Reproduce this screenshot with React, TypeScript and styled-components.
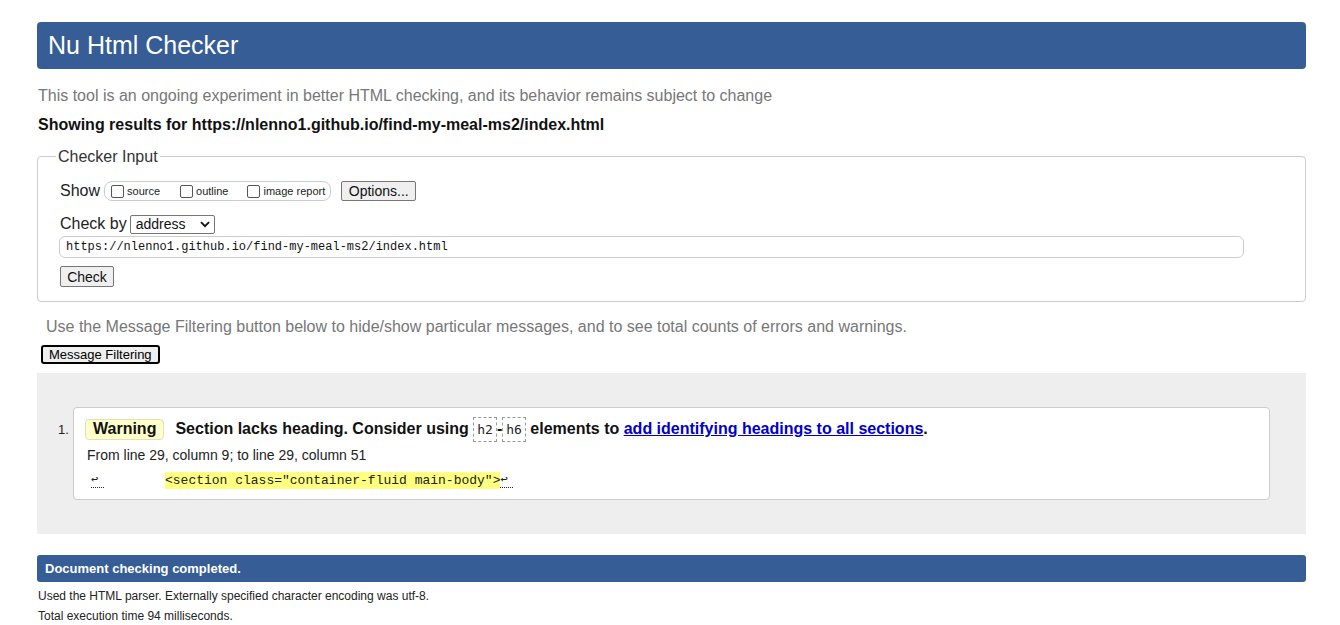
import React from "react";
import styled, { createGlobalStyle } from "styled-components";

const Global = createGlobalStyle`
  html, body { margin: 0; padding: 0; background: #fff; }
  body { font-family: "Liberation Sans", Arial, sans-serif; color: #111; }
`;

const BLUE = "#365d95";

const Page = styled.div`
  width: 1269px;
  padding: 22px 0 0 37px;
  display: flex;
  flex-direction: column;
`;

const Header = styled.h1`
  margin: 0;
  height: 47px;
  line-height: 47px;
  background: ${BLUE};
  border-radius: 4px;
  color: #fff;
  font-size: 25px;
  font-weight: normal;
  padding-left: 11px;
`;

const Lead = styled.p<{ $indent?: number; $top: number }>`
  margin: ${(p) => p.$top}px 0 0 ${(p) => p.$indent ?? 1}px;
  font-size: 16px;
  line-height: 20px;
  color: #777;
`;

const Results = styled.p`
  margin: 9px 0 0 1px;
  font-size: 16px;
  line-height: 20px;
  font-weight: bold;
  color: #111;
`;

const Fieldset = styled.fieldset`
  margin: 12px 0 0 0;
  padding: 11px 18px 14px 18px;
  border: 1px solid #ccc;
  border-radius: 4px;
  min-width: 0;
`;

const Legend = styled.legend`
  padding: 0 2px;
  font-size: 16px;
  line-height: 19px;
  color: #333;
`;

const Inner = styled.div`
  display: flex;
  flex-direction: column;
  padding-left: 3px;
`;

const Row = styled.div<{ $mt?: number }>`
  display: flex;
  align-items: center;
  margin-top: ${(p) => p.$mt ?? 0}px;
  margin-left: 1px;
`;

const Label = styled.span`
  font-size: 16px;
  line-height: 20px;
  color: #222;
`;

const CheckGroup = styled.span`
  display: inline-flex;
  align-items: center;
  height: 18px;
  margin-left: 4px;
  padding: 0 5px 0 6px;
  border: 1px solid #ccc;
  border-radius: 8px;
`;

const CheckItem = styled.label<{ $gap?: number }>`
  display: inline-flex;
  align-items: center;
  font-size: 11px;
  color: #222;
  margin-right: ${(p) => p.$gap ?? 0}px;
`;

const Box = styled.span`
  box-sizing: border-box;
  width: 13px;
  height: 13px;
  border: 1px solid #555;
  border-radius: 2px;
  margin-right: 3px;
  background: #fff;
`;

const Button = styled.button<{ $w: number; $h: number; $ml?: number }>`
  width: ${(p) => p.$w}px;
  height: ${(p) => p.$h}px;
  margin-left: ${(p) => p.$ml ?? 0}px;
  padding: 0;
  font-family: "Liberation Sans", Arial, sans-serif;
  font-size: 14px;
  color: #111;
  background: #efefef;
  border: 1px solid #767676;
  border-radius: 2px;
`;

const Select = styled.span`
  display: inline-flex;
  align-items: center;
  justify-content: space-between;
  box-sizing: border-box;
  width: 85px;
  height: 19px;
  margin-left: 3px;
  padding: 0 4px 0 5px;
  border: 1px solid #767676;
  border-radius: 2px;
  font-size: 14px;
  color: #111;
`;

const UrlInput = styled.div`
  box-sizing: border-box;
  width: 1185px;
  height: 22px;
  margin-top: 2px;
  padding-left: 6px;
  border: 1px solid #ccc;
  border-radius: 6px;
  font-family: "Liberation Mono", monospace;
  font-size: 12px;
  line-height: 20px;
  color: #111;
`;

const FilterButton = styled.button`
  align-self: flex-start;
  margin: 8px 0 0 4px;
  height: 19px;
  padding: 0 6px;
  font-family: "Liberation Sans", Arial, sans-serif;
  font-size: 13px;
  color: #000;
  background: #efefef;
  border: 2px solid #000;
  border-radius: 3px;
  line-height: 15px;
`;

const Panel = styled.div`
  margin-top: 9px;
  height: 161px;
  box-sizing: border-box;
  padding: 34px 36px 0 21px;
  background: #eee;
  display: flex;
  align-items: flex-start;
`;

const Num = styled.span`
  width: 15px;
  font-size: 13px;
  line-height: 16px;
  margin-top: 15px;
  color: #222;
`;

const Card = styled.div`
  flex: 1;
  box-sizing: border-box;
  height: 93px;
  background: #fff;
  border: 1px solid #ccc;
  border-radius: 4px;
  padding: 10px 0 0 11px;
  display: flex;
  flex-direction: column;
`;

const MsgLine = styled.div`
  display: flex;
  align-items: center;
  height: 22px;
  font-size: 16px;
  font-weight: bold;
  color: #111;
  white-space: pre;
`;

const Badge = styled.span`
  box-sizing: border-box;
  height: 21px;
  padding: 0 7px;
  margin-right: 11px;
  display: inline-flex;
  align-items: center;
  background: #ffffcc;
  border: 1px solid #e4e0b0;
  border-radius: 4px;
`;

const CodeBox = styled.code`
  display: inline-flex;
  align-items: center;
  box-sizing: border-box;
  height: 25px;
  padding: 0 3px;
  border: 1px dashed #999;
  font-family: "DejaVu Sans Mono", monospace;
  font-size: 13px;
  font-weight: normal;
  color: #222;
`;

const Link = styled.a`
  color: #0000cc;
  text-decoration: underline;
`;

const Location = styled.div`
  margin-top: 6px;
  margin-left: 2px;
  font-size: 14px;
  line-height: 18px;
  color: #222;
`;

const Extract = styled.div`
  margin-top: 8px;
  margin-left: 6px;
  display: flex;
  align-items: center;
  font-family: "Liberation Mono", monospace;
  font-size: 13px;
  line-height: 17px;
  color: #222;
  white-space: pre;
`;

const Ret = styled.span`
  border-bottom: 1px dotted #222;
  font-size: 12px;
  line-height: 14px;
  width: 13px;
`;

const Mark = styled.mark`
  background: #ffff80;
  color: #222;
  margin-left: 61px;
`;

const DoneBar = styled.div`
  margin-top: 21px;
  height: 27px;
  line-height: 27px;
  background: ${BLUE};
  border-radius: 3px;
  color: #fff;
  font-size: 13px;
  font-weight: bold;
  padding-left: 8px;
`;

const Foot = styled.p<{ $top: number }>`
  margin: ${(p) => p.$top}px 0 0 1px;
  font-size: 12px;
  line-height: 20px;
  color: #222;
`;

function Chevron() {
  return (
    <svg width="10" height="7" viewBox="0 0 10 7">
      <path d="M1 1.2 L5 5.2 L9 1.2" fill="none" stroke="#111" strokeWidth="1.8" />
    </svg>
  );
}

export default function App() {
  return (
    <>
      <Global />
      <Page>
        <Header>Nu Html Checker</Header>
        <Lead $top={17}>This tool is an ongoing experiment in better HTML checking, and its behavior remains subject to change</Lead>
        <Results>Showing results for https://nlenno1.github.io/find-my-meal-ms2/index.html</Results>
        <Fieldset>
          <Legend>Checker Input</Legend>
          <Inner>
            <Row $mt={4}>
              <Label>Show</Label>
              <CheckGroup>
                <CheckItem $gap={20}><Box />source</CheckItem>
                <CheckItem $gap={19}><Box />outline</CheckItem>
                <CheckItem><Box />image report</CheckItem>
              </CheckGroup>
              <Button $w={75} $h={20} $ml={10}>Options...</Button>
            </Row>
            <Row $mt={13}>
              <Label>Check by</Label>
              <Select>address<Chevron /></Select>
            </Row>
            <UrlInput>https://nlenno1.github.io/find-my-meal-ms2/index.html</UrlInput>
            <Row $mt={8}>
              <Button $w={54} $h={21}>Check</Button>
            </Row>
          </Inner>
        </Fieldset>
        <Lead $top={15} $indent={9}>Use the Message Filtering button below to hide/show particular messages, and to see total counts of errors and warnings.</Lead>
        <FilterButton>Message Filtering</FilterButton>
        <Panel>
          <Num>1.</Num>
          <Card>
            <MsgLine>
              <Badge>Warning</Badge>
              {"Section lacks heading. Consider using "}
              <CodeBox>h2</CodeBox>
              {"-"}
              <CodeBox>h6</CodeBox>
              {" elements to "}
              <Link href="#">add identifying headings to all sections</Link>
              {"."}
            </MsgLine>
            <Location>From line 29, column 9; to line 29, column 51</Location>
            <Extract>
              <Ret>↩</Ret>
              <Mark>{'<section class="container-fluid main-body">'}</Mark>
              <Ret>↩</Ret>
            </Extract>
          </Card>
        </Panel>
        <DoneBar>Document checking completed.</DoneBar>
        <Foot $top={4}>Used the HTML parser. Externally specified character encoding was utf-8.</Foot>
        <Foot $top={0}>Total execution time 94 milliseconds.</Foot>
      </Page>
    </>
  );
}
